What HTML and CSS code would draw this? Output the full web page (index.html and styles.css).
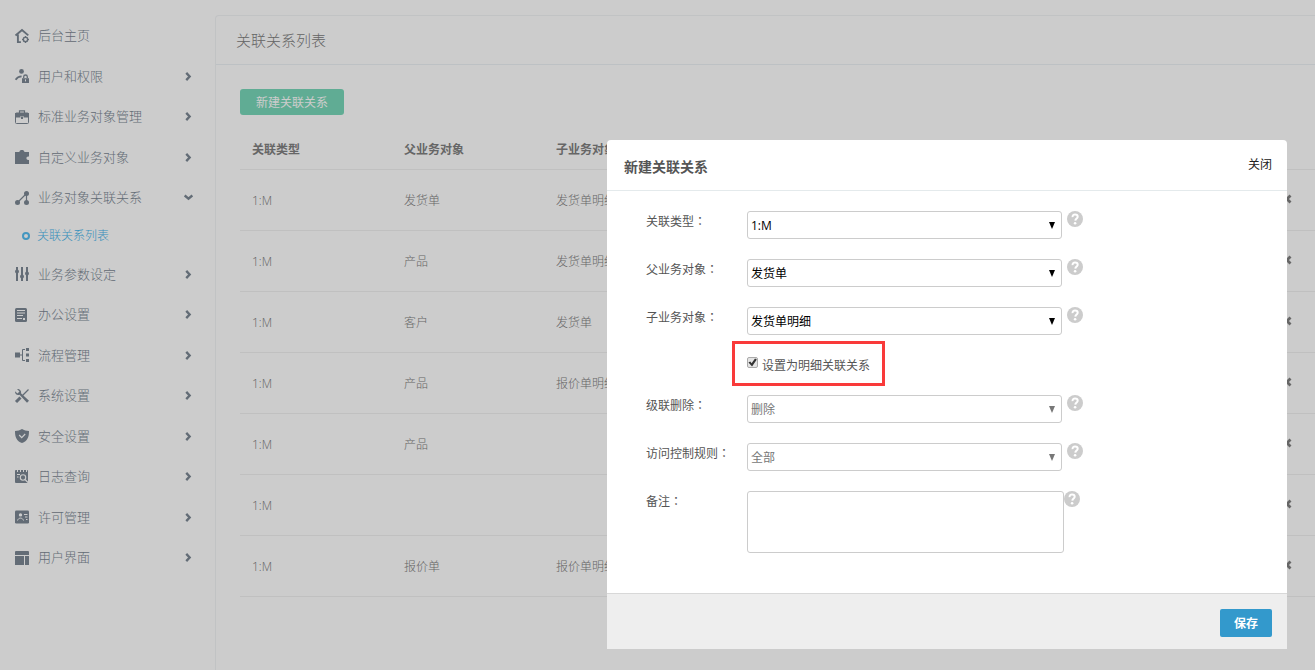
FILE: index.html
```html
<!DOCTYPE html>
<html lang="zh-CN">
<head>
<meta charset="utf-8">
<meta name="viewport" content="width=device-width, initial-scale=1">
<title>关联关系列表</title>
<link rel="stylesheet" href="styles.css">
</head>
<body>
<svg class="defs" aria-hidden="true">
  <symbol id="chev" viewBox="0 0 8 8"><path d="M2 0.8 5 4 2 7.2" fill="none" stroke="currentColor" stroke-width="2.1"/></symbol>
  <symbol id="chev-down" viewBox="0 0 8 8"><path d="M0.6 2.2 4 5 7.4 2.2" fill="none" stroke="currentColor" stroke-width="2.1"/></symbol>
  <symbol id="cross" viewBox="0 0 10 10"><path d="M1.500 1.500 8.500 8.500M8.500 1.500 1.500 8.500" fill="none" stroke="currentColor" stroke-width="2.800"/></symbol>
  <symbol id="help" viewBox="0 0 16 16"><circle cx="8" cy="8" r="8" fill="#ccc"/><path d="M5.600 6.100C5.400 4.400 6.500 3.500 8 3.500s2.700.9 2.700 2.300c0 1.700-2.200 1.800-2.400 3.900" fill="none" stroke="#fff" stroke-width="2"/><circle cx="8.100" cy="12.200" r="1.300" fill="#fff"/></symbol>
</svg>
<div class="app">
  <nav class="sidebar" aria-label="后台菜单">
    <a class="nav-item" href="#">
      <svg class="nav-icon" viewBox="0 0 14 14"><path d="M0.5 6.500 7 1l6.300 5.400M2.900 5.500v7.600h3" fill="none" stroke="currentColor" stroke-width="1.900"/><circle cx="10.500" cy="10.500" r="2.200" fill="none" stroke="currentColor" stroke-width="1.500"/><path d="M10.500 7v1M10.500 13v1M7 10.500h1M13 10.500h1" stroke="currentColor"/></svg>
      <span class="nav-text">后台主页</span>
    </a>
    <a class="nav-item" href="#">
      <svg class="nav-icon" viewBox="0 0 14 14"><circle cx="6.500" cy="2.400" r="2.400" fill="currentColor"/><path d="M0.600 10.800C2 8.500 4 7.400 6.600 7.300" fill="none" stroke="currentColor" stroke-width="1.800"/><path d="M7 9.200h7v4.800H7z" fill="currentColor"/><path d="M8.700 9V7.800a1.800 1.800 0 0 1 3.600 0V9" fill="none" stroke="currentColor" stroke-width="1.300"/><path d="M10.500 10.400v2" stroke="#fff"/></svg>
      <span class="nav-text">用户和权限</span><svg class="arrow"><use href="#chev"/></svg>
    </a>
    <a class="nav-item" href="#">
      <svg class="nav-icon" viewBox="0 0 14 14"><path d="M4.500 3V.8h5V3" fill="none" stroke="currentColor" stroke-width="1.200"/><rect x=".5" y="3" width="13" height="10.500" rx="1" fill="none" stroke="currentColor"/><path d="M0 3h14v4.500H8.500V6h-3v1.500H0zM6 6.500h2V9H6z" fill="currentColor"/></svg>
      <span class="nav-text">标准业务对象管理</span><svg class="arrow"><use href="#chev"/></svg>
    </a>
    <a class="nav-item" href="#">
      <svg class="nav-icon" viewBox="0 0 14 14"><path d="M0 2h4.400C4.400-.6 9.300-.6 9.400 2H14v4.600c-3.400-.8-3.400 4 0 3.300V14H0z" fill="currentColor"/></svg>
      <span class="nav-text">自定义业务对象</span><svg class="arrow"><use href="#chev"/></svg>
    </a>
    <a class="nav-item" href="#" aria-expanded="true">
      <svg class="nav-icon" viewBox="0 0 14 14"><path d="M2.500 11.500 11.500 2.500V11.500" fill="none" stroke="currentColor" stroke-width="1.200"/><g fill="currentColor"><circle cx="2.500" cy="11.500" r="2.500"/><circle cx="11.500" cy="2.500" r="2.500"/><circle cx="11.500" cy="11.500" r="2.500"/></g></svg>
      <span class="nav-text">业务对象关联关系</span><svg class="arrow"><use href="#chev-down"/></svg>
    </a>
    <a class="sub-item" href="#" aria-current="page">关联关系列表</a>
    <a class="nav-item" href="#">
      <svg class="nav-icon" viewBox="0 0 14 14"><path d="M2 0v14M7 0v14M12 0v14" stroke="currentColor" stroke-width="2"/><g fill="currentColor"><circle cx="2" cy="4.500" r="2"/><circle cx="7" cy="9.500" r="2"/><circle cx="12" cy="6.500" r="2"/></g></svg>
      <span class="nav-text">业务参数设定</span><svg class="arrow"><use href="#chev"/></svg>
    </a>
    <a class="nav-item" href="#">
      <svg class="nav-icon" viewBox="0 0 14 14"><rect width="12" height="14" rx="1.500" fill="currentColor"/><path d="M2 2.500h8M2 5h8M2 7.500h6M2 10.500h5" stroke="#fff"/><path d="M8 10h2v2H8z" fill="#fff"/></svg>
      <span class="nav-text">办公设置</span><svg class="arrow"><use href="#chev"/></svg>
    </a>
    <a class="nav-item" href="#">
      <svg class="nav-icon" viewBox="0 0 14 14"><path d="M4 7h4M10 1.500H7.500v11H10" fill="none" stroke="currentColor"/><path d="M0 4.500h5v5H0zM11 0h3v3h-3zM11 5.500h3v3h-3zM11 11h3v3h-3z" fill="currentColor"/></svg>
      <span class="nav-text">流程管理</span><svg class="arrow"><use href="#chev"/></svg>
    </a>
    <a class="nav-item" href="#">
      <svg class="nav-icon" viewBox="0 0 14 14"><path d="M2 0 4.500 2.500 2.500 4.500 0 2.300C-.2 5 2.200 6.700 4.500 5.700l7.500 8 2-1.900-8-7.600C6.700 1.800 4.500-.3 2 0z" fill="currentColor"/><path d="M1 13 5.500 8.500" stroke="currentColor" stroke-width="3"/><path d="M7.500 6.500 13.500.5" stroke="currentColor" stroke-width="1.300"/></svg>
      <span class="nav-text">系统设置</span><svg class="arrow"><use href="#chev"/></svg>
    </a>
    <a class="nav-item" href="#">
      <svg class="nav-icon" viewBox="0 0 14 14"><path d="M7 0c2 1.300 4.200 2 7 2 0 6-1.500 10-7 12C1.500 12 0 8 0 2c2.800 0 5-.7 7-2z" fill="currentColor"/><path d="m4.200 6 2.500 2.600L10.200 5" fill="none" stroke="#fff" stroke-width="1.200"/></svg>
      <span class="nav-text">安全设置</span><svg class="arrow"><use href="#chev"/></svg>
    </a>
    <a class="nav-item" href="#">
      <svg class="nav-icon" viewBox="0 0 14 14"><rect width="13" height="13" rx="1" fill="currentColor"/><path d="M2.500 0v2M5.500 0v2M8.500 0v2M11.500 0v2M2 4.500h3M2 7h1.500" stroke="#fff"/><circle cx="8" cy="7.500" r="2.700" fill="none" stroke="#fff" stroke-width="1.100"/><path d="m10 9.500 3 3" stroke="#fff" stroke-width="1.300"/></svg>
      <span class="nav-text">日志查询</span><svg class="arrow"><use href="#chev"/></svg>
    </a>
    <a class="nav-item" href="#">
      <svg class="nav-icon" viewBox="0 0 14 14"><rect y=".5" width="14" height="13" rx="1.200" fill="currentColor"/><circle cx="5.500" cy="4.900" r="1.700" fill="#fff"/><path d="M2.500 10.500C3.500 7.300 7.500 7.300 8.500 10.500M9 4.500h3.500M10 7h2.500M11 9.500h1.500" fill="none" stroke="#fff"/></svg>
      <span class="nav-text">许可管理</span><svg class="arrow"><use href="#chev"/></svg>
    </a>
    <a class="nav-item" href="#">
      <svg class="nav-icon" viewBox="0 0 14 14"><path d="M1 0h12q1 0 1 1v3H0V1q0-1 1-1zM0 5h9v9H0zM10 5h4v9h-4z" fill="currentColor"/></svg>
      <span class="nav-text">用户界面</span><svg class="arrow"><use href="#chev"/></svg>
    </a>
  </nav>
  <main class="panel">
    <h1 class="panel-title">关联关系列表</h1>
    <div class="panel-body">
      <button class="btn-new" type="button">新建关联关系</button>
      <table class="list">
        <thead><tr><th>关联类型</th><th>父业务对象</th><th>子业务对象</th><th class="action"></th></tr></thead>
        <tbody>
          <tr><td>1:M</td><td>发货单</td><td>发货单明细</td><td class="action"><svg class="cross"><use href="#cross"/></svg></td></tr>
          <tr><td>1:M</td><td>产品</td><td>发货单明细</td><td class="action"><svg class="cross"><use href="#cross"/></svg></td></tr>
          <tr><td>1:M</td><td>客户</td><td>发货单</td><td class="action"><svg class="cross"><use href="#cross"/></svg></td></tr>
          <tr><td>1:M</td><td>产品</td><td>报价单明细</td><td class="action"><svg class="cross"><use href="#cross"/></svg></td></tr>
          <tr><td>1:M</td><td>产品</td><td></td><td class="action"><svg class="cross"><use href="#cross"/></svg></td></tr>
          <tr><td>1:M</td><td></td><td></td><td class="action"><svg class="cross"><use href="#cross"/></svg></td></tr>
          <tr><td>1:M</td><td>报价单</td><td>报价单明细</td><td class="action"><svg class="cross"><use href="#cross"/></svg></td></tr>
        </tbody>
      </table>
    </div>
  </main>
</div>
<div class="overlay">
  <form class="modal" role="dialog" aria-labelledby="dialog-title">
    <header class="modal-head">
      <h2 class="modal-title" id="dialog-title">新建关联关系</h2>
      <button class="close" type="button">关闭</button>
    </header>
    <div class="modal-body">
      <div class="row">
        <label class="label" for="type">关联类型<span class="colon" lang="zh-TW">：</span></label>
        <span class="select"><select id="type"><option>1:M</option></select></span>
        <svg class="help"><use href="#help"/></svg>
      </div>
      <div class="row">
        <label class="label" for="parent">父业务对象<span class="colon" lang="zh-TW">：</span></label>
        <span class="select"><select id="parent"><option>发货单</option></select></span>
        <svg class="help"><use href="#help"/></svg>
      </div>
      <div class="row">
        <label class="label" for="child">子业务对象<span class="colon" lang="zh-TW">：</span></label>
        <span class="select"><select id="child"><option>发货单明细</option></select></span>
        <svg class="help"><use href="#help"/></svg>
      </div>
      <div class="check-row">
        <input class="check" id="detail" type="checkbox" checked>
        <label for="detail">设置为明细关联关系</label>
      </div>
      <div class="row row-after-check">
        <label class="label" for="cascade">级联删除<span class="colon" lang="zh-TW">：</span></label>
        <span class="select"><select id="cascade" disabled><option>删除</option></select></span>
        <svg class="help"><use href="#help"/></svg>
      </div>
      <div class="row">
        <label class="label" for="access">访问控制规则<span class="colon" lang="zh-TW">：</span></label>
        <span class="select"><select id="access" disabled><option>全部</option></select></span>
        <svg class="help"><use href="#help"/></svg>
      </div>
      <div class="row row-note">
        <label class="label" for="note">备注<span class="colon" lang="zh-TW">：</span></label>
        <textarea class="note" id="note"></textarea>
        <svg class="help"><use href="#help"/></svg>
      </div>
    </div>
    <footer class="modal-foot"><button class="btn-save" type="button">保存</button></footer>
  </form>
</div>
</body>
</html>
```
FILE: styles.css
```css
*, *::before, *::after { box-sizing: border-box; }

html, body { height: 100%; }

body {
  margin: 0;
  overflow: hidden;
  background: #fff;
  color: #808080;
  font: 12px/18px "Open Sans", "Noto Sans CJK SC", sans-serif;
}

button, select, textarea { font: inherit; margin: 0; }

.defs { display: none; }

.app {
  display: flex;
  min-height: 100%;
  padding-top: 15px;
}

/* Sidebar */
.sidebar { flex: none; width: 215px; padding-top: 1px; }

.nav-item {
  display: flex;
  align-items: center;
  padding: 10px 22px 11px 15px;
  color: #7c8894;
  font-size: 13px;
  font-weight: 300;
  line-height: 1.5;
  text-decoration: none;
}

.nav-icon { width: 14px; height: 14px; margin-right: 9px; overflow: visible; }
.nav-text { flex: 1; }
.arrow { width: 9px; height: 9px; }

.sub-item {
  display: flex;
  align-items: center;
  gap: 7px;
  padding: 8px 22px 10px;
  color: #45b4ec;
  font-weight: 300;
  text-decoration: none;
}

.sub-item::before {
  content: "";
  width: 8px;
  height: 8px;
  border: 2px solid #55bdf0;
  border-radius: 50%;
}

/* List panel */
.panel {
  flex: 1;
  min-height: calc(100vh - 15px);
  border: 1px solid #f2f4f6;
  border-width: 1px 0 0 1px;
  border-radius: 4px 0 0 0;
}

.panel-title {
  margin: 0;
  padding: 12px 20px;
  border-bottom: 1px solid #edf2f6;
  font-size: 15px;
  font-weight: 300;
  line-height: 24px;
}

.panel-body { padding: 24px 0 0 24px; }

.btn-new {
  display: block;
  height: 26px;
  padding: 2px 16px 0;
  border: 0;
  border-radius: 3px;
  background: #79d8b9;
  color: #fff;
}

.list {
  width: 100%;
  margin-top: 14px;
  border-collapse: collapse;
  table-layout: fixed;
}

.list th, .list td {
  width: 152px;
  padding: 2px 12px 0;
  border-bottom: 1px solid #f0f0f0;
  text-align: left;
  white-space: nowrap;
}

.list th { height: 40px; padding-top: 3px; font-weight: 700; }
.list td { height: 61px; font-weight: 300; }
.list .action { width: auto; padding: 0 23px 0 0; text-align: right; }
.cross { width: 10px; height: 10px; }

/* Dialog */
.overlay {
  position: fixed;
  inset: 0;
  display: flex;
  justify-content: flex-end;
  align-items: flex-start;
  padding: 140px 28px 0;
  background: rgba(0, 0, 0, 0.2);
}

.modal {
  width: 680px;
  border-radius: 4px 4px 0 0;
  background: #fff;
  color: #555;
}

.modal-head {
  display: flex;
  justify-content: space-between;
  padding: 14px 15px 11px 17px;
  border-bottom: 1px solid #e4eaec;
}

.modal-title { margin: 0; font-size: 14px; line-height: 25px; }

.close {
  height: 20px;
  padding: 2px 0 0;
  border: 0;
  background: none;
  color: #222;
}

.modal-body { padding: 20px 39px 40px; }

.row { display: flex; align-items: flex-start; }
.row + .row { margin-top: 20px; }
.label { flex: none; width: 101px; padding-top: 2px; }
.colon { font-family: "Noto Sans CJK TC", sans-serif; line-height: 1; }

.select { position: relative; width: 315px; }

.select select {
  display: block;
  width: 100%;
  height: 28px;
  padding: 2px 3px 0;
  border: 1px solid #ccc;
  border-radius: 3px;
  appearance: none;
  background: #fff;
  color: #000;
}

.select select:disabled { color: #777; opacity: 1; }

.select::after {
  content: "";
  position: absolute;
  top: 11px;
  right: 7px;
  width: 6px;
  height: 7px;
  background: #000;
  clip-path: polygon(0 0, 100% 0, 50% 100%);
  pointer-events: none;
}

.select:has(:disabled)::after { background: #777; }

.help { flex: none; width: 16px; height: 16px; margin-left: 5px; }

.check-row {
  display: flex;
  width: fit-content;
  gap: 4px;
  margin: 6px 0 0 86px;
  padding: 13px 12px 8px;
  border: 3px solid #f93a3a;
}

.check {
  width: 11px;
  height: 11px;
  margin: 0;
  border: 1px solid #aaa;
  border-radius: 2px;
  appearance: none;
  background: #e4e4e4;
}

.check:checked::before {
  content: "";
  display: block;
  width: 9px;
  height: 9px;
  background: #333;
  clip-path: polygon(5% 50%, 25% 38%, 40% 58%, 78% 5%, 98% 18%, 45% 95%);
}

.row-after-check { margin-top: 9px; }

.note {
  width: 317px;
  height: 62px;
  border: 1px solid #ccc;
  border-radius: 3px;
  resize: none;
}

.row-note .help { margin-left: 0; }

.modal-foot {
  display: flex;
  justify-content: flex-end;
  padding: 15px 15px 12px;
  border-top: 1px solid #d8d8d8;
  background: #eee;
}

.btn-save {
  height: 28px;
  padding: 2px 14px 0;
  border: 0;
  border-radius: 2px;
  background: #39c;
  color: #fff;
  font-weight: 700;
}
```
